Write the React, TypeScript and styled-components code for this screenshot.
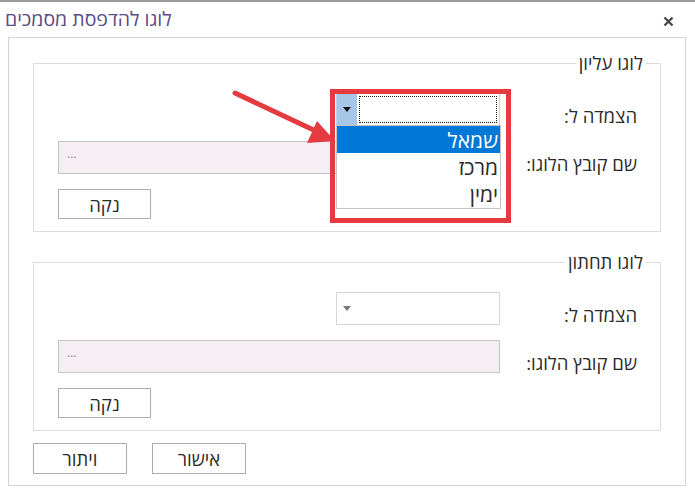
import React from 'react'
import styled, { createGlobalStyle } from 'styled-components';

const GlobalStyle = createGlobalStyle`
    html, body {
        margin: 0;
        padding: 0;
        background: #fff;
    }
    * {
        box-sizing: border-box;
    }
`;

type LogoGroupProps = {
    title: string;
    open?: boolean;
}

const options = ['שמאל', 'מרכז', 'ימין'];

const LogoGroup: React.FC<LogoGroupProps> = ({ title, open }) => {
    return (
        <Group>
            <Legend>{title}</Legend>
            <FormGrid>
                <Label>הצמדה ל:</Label>
                <Combo open={open}>
                    <ComboText open={open} />
                    <ComboArrow open={open}>
                        <svg width="8" height="5" viewBox="0 0 8 5">
                            <path d="M0 0 L8 0 L4 5 Z" fill={open ? '#111' : '#777'} />
                        </svg>
                    </ComboArrow>
                    {open && (
                        <OptionList>
                            {options.map((o, i) => (
                                <OptionItem key={o} selected={i === 0}>{o}</OptionItem>
                            ))}
                        </OptionList>
                    )}
                </Combo>
                <Label>שם קובץ הלוגו:</Label>
                <FileBox>...</FileBox>
                <span />
                <Button>נקה</Button>
            </FormGrid>
        </Group>
    )
}

export default function App() {
    return (
        <Page>
            <GlobalStyle />
            <TitleBar>
                <Title>לוגו להדפסת מסמכים</Title>
                <Close>
                    <svg width="11" height="11" viewBox="0 0 11 11">
                        <path d="M1.5 1.5 L9.5 9.5 M9.5 1.5 L1.5 9.5" stroke="#444" strokeWidth="2.2" />
                    </svg>
                </Close>
            </TitleBar>
            <Panel>
                <LogoGroup title="לוגו עליון" open />
                <LogoGroup title="לוגו תחתון" />
                <Actions>
                    <Button>אישור</Button>
                    <Button>ויתור</Button>
                </Actions>
            </Panel>
            <Highlight />
            <Pointer width="120" height="70" viewBox="0 0 120 70">
                <line x1="10" y1="7" x2="95" y2="47" stroke="#e53a40" strokeWidth="5" strokeLinecap="round" />
                <path d="M110 55 L92 35 L82 57 Z" fill="#e53a40" />
            </Pointer>
        </Page>
    )
}

const textColor = '#2b2b2b';

const Page = styled.div`
    position: relative;
    width: 695px;
    height: 496px;
    background: #fff;
    border-top: 2px solid #9a9a9a;
    font-family: "Open Sans", "Liberation Sans", "DejaVu Sans", sans-serif;
    color: ${textColor};
    overflow: hidden;
`;

const TitleBar = styled.div`
    height: 35px;
    display: flex;
    align-items: center;
    justify-content: space-between;
    padding: 0 21px 0 5px;
`;

const Title = styled.div`
    direction: rtl;
    font-size: 19.5px;
    color: #5a4d84;
    padding-bottom: 2px;
`;

const Close = styled.div`
    display: flex;
    align-items: center;
    padding-top: 3px;
`;

const Panel = styled.div`
    direction: rtl;
    margin: 0 9px 0 8px;
    border: 1px solid #d4d4d4;
    padding: 15px 24px 11px 24px;
    display: flex;
    flex-direction: column;
    gap: 20px;
`;

const Group = styled.fieldset`
    margin: 0;
    border: 1px solid #dcdcdc;
    padding: 20px 23px 12px 24px;
    min-width: 0;
`;

const Legend = styled.legend`
    font-size: 18.5px;
    line-height: 20px;
    padding: 0 3px;
    margin-right: -9px;
    color: ${textColor};
`;

const FormGrid = styled.div`
    display: grid;
    grid-template-columns: 137px 1fr;
    grid-template-rows: 33px 33px 30px;
    row-gap: 15px;
`;

const Label = styled.div`
    font-size: 18.5px;
    align-self: center;
    padding-top: 11px;
    white-space: nowrap;
`;

const Combo = styled.div<{ open?: boolean }>`
    position: relative;
    width: 164px;
    justify-self: start;
    display: flex;
    border: 1px solid ${({ open }) => open ? '#b9d3ec' : '#d6d6d6'};
    background: #fff;
`;

const ComboText = styled.div<{ open?: boolean }>`
    flex: 1;
    margin: 2px 2px 2px 2px;
    border: 1px dotted ${({ open }) => open ? '#222' : 'transparent'};
`;

const ComboArrow = styled.div<{ open?: boolean }>`
    width: 20px;
    display: flex;
    align-items: center;
    justify-content: center;
    background: ${({ open }) => open ? '#a7c7e8' : 'transparent'};
`;

const OptionList = styled.div`
    position: absolute;
    top: 100%;
    right: -2px;
    left: -1px;
    background: #fff;
    border: 1px solid #c4c4c4;
    padding-bottom: 1px;
    z-index: 2;
`;

const OptionItem = styled.div<{ selected?: boolean }>`
    height: 27px;
    line-height: 28px;
    font-size: 21px;
    padding-right: 2px;
    background: ${({ selected }) => selected ? '#0078d7' : '#fff'};
    color: ${({ selected }) => selected ? '#fff' : textColor};
`;

const FileBox = styled.div`
    border: 1px solid #c4c4c4;
    background: #f5eff3;
    direction: ltr;
    padding-left: 8px;
    font-size: 12px;
    color: #888;
    line-height: 24px;
`;

const Button = styled.div`
    width: 93px;
    height: 30px;
    justify-self: end;
    border: 1px solid #adadad;
    background: #fff;
    display: flex;
    align-items: center;
    justify-content: center;
    font-size: 18.5px;
    color: ${textColor};
`;

const Actions = styled.div`
    display: flex;
    justify-content: flex-end;
    gap: 25px;
    margin-top: -8px;

    & > div {
        width: 94px;
        height: 31px;
    }
`;

const Highlight = styled.div`
    position: absolute;
    left: 330px;
    top: 87px;
    width: 181px;
    height: 134px;
    border: 5px solid #e53a40;
    pointer-events: none;
`;

const Pointer = styled.svg`
    position: absolute;
    left: 225px;
    top: 84px;
    pointer-events: none;
`;
